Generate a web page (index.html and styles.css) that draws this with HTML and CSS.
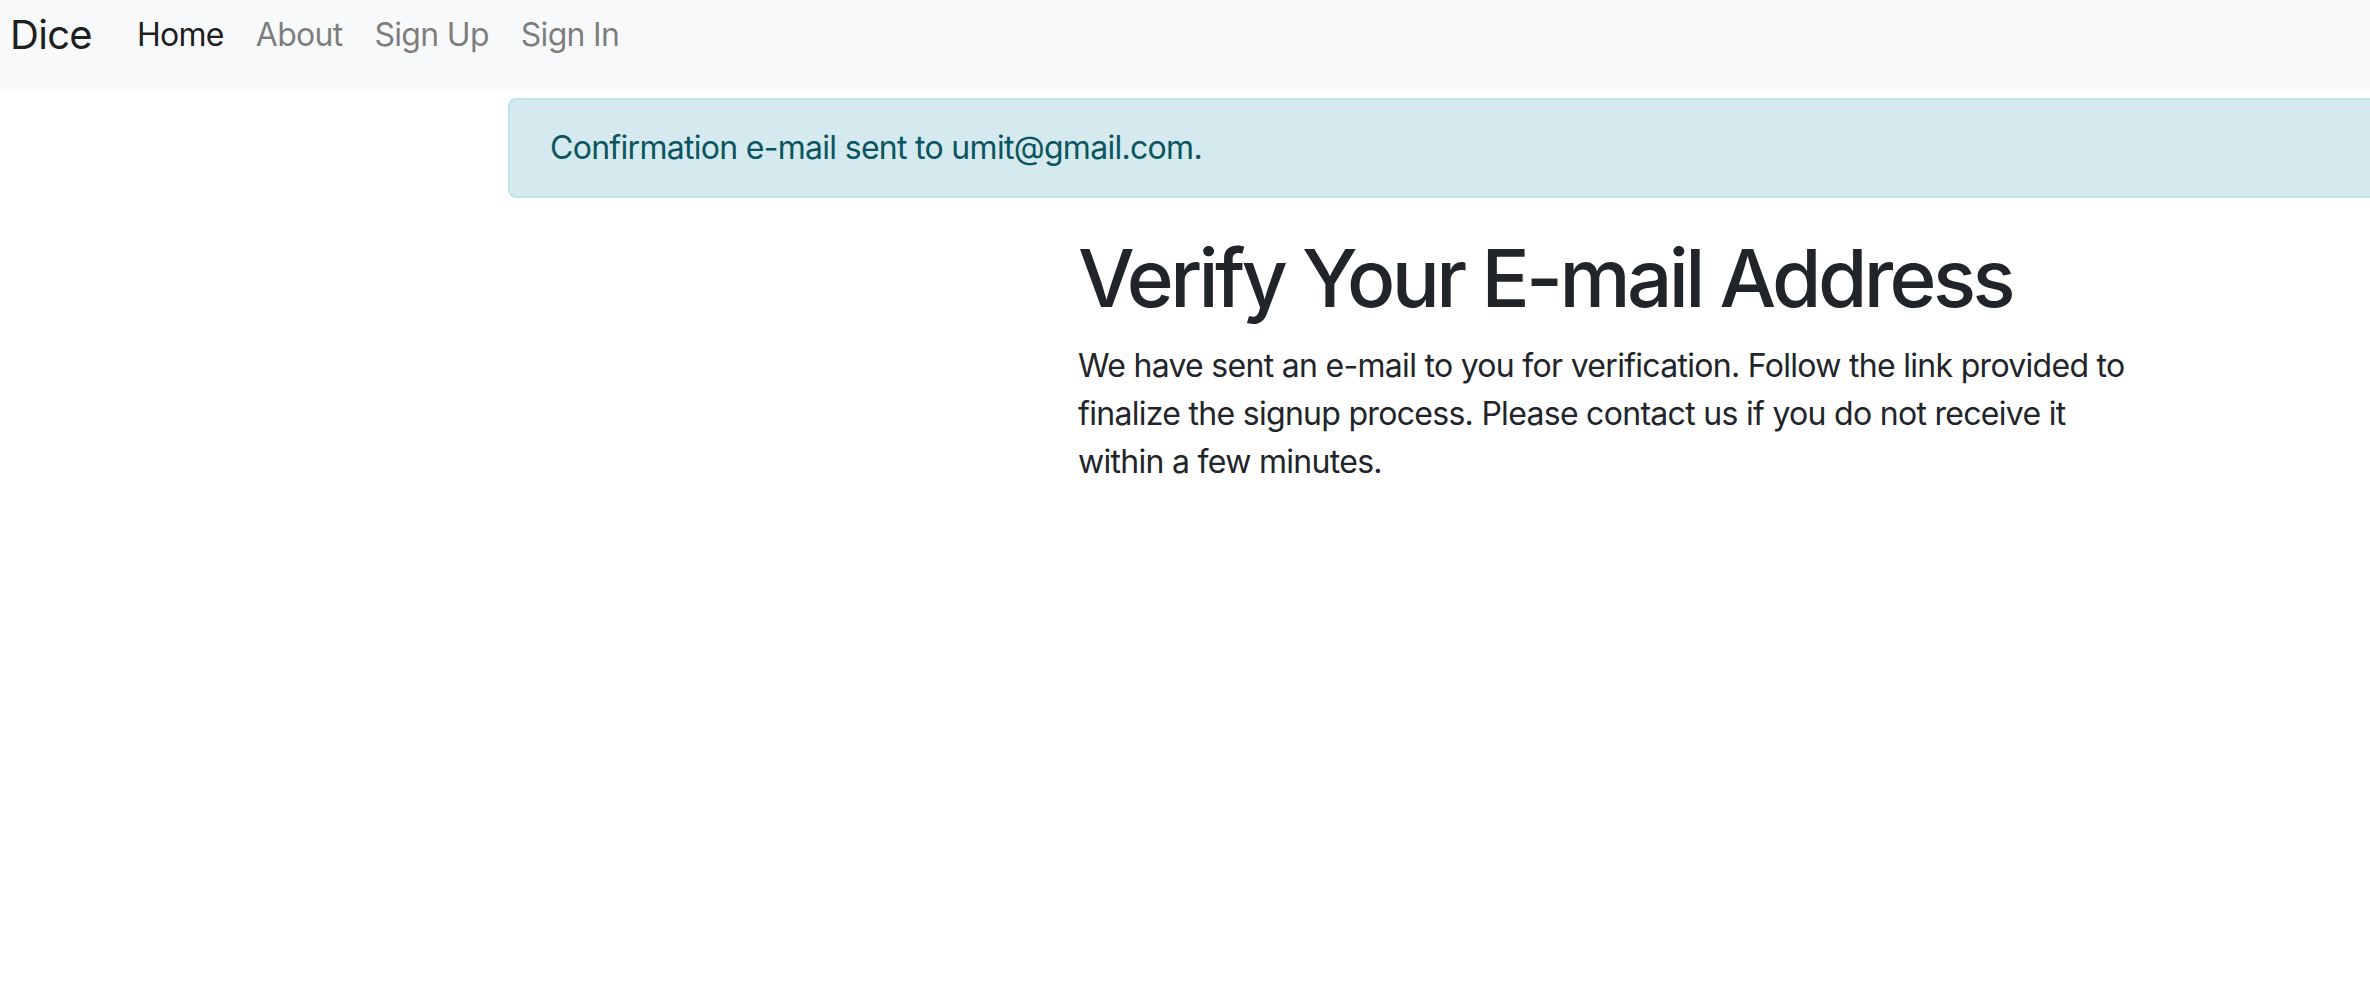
FILE: index.html
```html
<!DOCTYPE html>
<html lang="en">
<head>
<meta charset="utf-8">
<title>Dice</title>
<link rel="stylesheet" href="styles.css">
</head>
<body>
<nav class="navbar">
  <a class="brand" href="#">Dice</a>
  <ul class="nav">
    <li><a class="nav-link active" href="#">Home</a></li>
    <li><a class="nav-link" href="#">About</a></li>
    <li><a class="nav-link" href="#">Sign Up</a></li>
    <li><a class="nav-link" href="#">Sign In</a></li>
  </ul>
</nav>
<main class="page">
  <div class="alert">Confirmation e-mail sent to umit@gmail.com.</div>
  <section class="content">
    <h1 class="title">Verify Your E-mail Address</h1>
    <p class="lead-text">We have sent an e-mail to you for verification. Follow the link provided to finalize the signup process. Please contact us if you do not receive it within a few minutes.</p>
  </section>
</main>
</body>
</html>
```
FILE: styles.css
```css
html, body {
  margin: 0;
  padding: 0;
  overflow-x: hidden;
}
body {
  font-family: Inter, "Noto Sans", "Liberation Sans", sans-serif;
  font-size: 32px;
  line-height: 1.5;
  letter-spacing: -0.022em;
  color: #212529;
  background: #fff;
}
.navbar {
  display: flex;
  align-items: flex-start;
  height: 89px;
  background: #f8f9fa;
  padding-left: 10px;
  box-sizing: border-box;
}
.brand {
  font-size: 40px;
  line-height: 60px;
  margin-top: 5px;
  margin-right: 29px;
  color: rgba(0,0,0,.9);
  text-decoration: none;
}
.nav {
  display: flex;
  list-style: none;
  margin: 0;
  padding: 0;
  margin-top: 11px;
}
.nav-link {
  display: block;
  padding: 0 16px;
  line-height: 48px;
  color: rgba(0,0,0,.5);
  text-decoration: none;
}
.nav-link.active {
  color: rgba(0,0,0,.9);
}
.page {
  padding-top: 9px;
  padding-left: 508px;
}
.alert {
  width: 2200px;
  box-sizing: border-box;
  padding: 24px 40px;
  border: 2px solid #bee5eb;
  border-radius: 8px;
  background: #d4eaef;
  color: #0c5460;
  line-height: 48px;
  margin-bottom: 32px;
}
.content {
  margin-left: 570px;
  width: 1075px;
}
.title {
  margin: 0 0 16px;
  font-size: 80px;
  font-weight: 500;
  line-height: 1.2;
  letter-spacing: -0.045em;
}
.lead-text {
  margin: 0;
}
```
